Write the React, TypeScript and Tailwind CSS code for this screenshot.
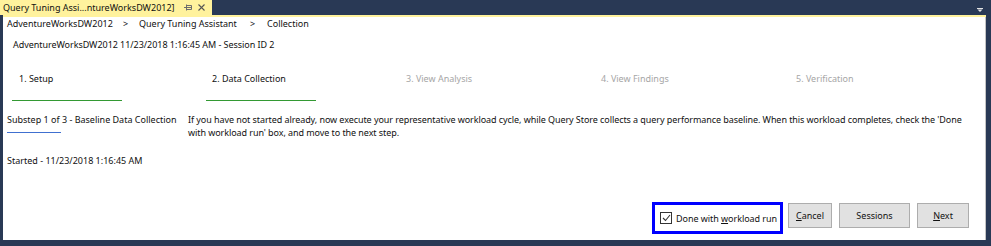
import React from 'react';

const steps = [
  { label: '1. Setup', done: true },
  { label: '2. Data Collection', done: true },
  { label: '3. View Analysis', done: false },
  { label: '4. View Findings', done: false },
  { label: '5. Verification', done: false },
];

function PinIcon() {
  return (
    <svg width="8" height="7" viewBox="0 0 8 7" className="text-[#6d6d6d]">
      <path d="M0 3.5h2.5M2.5 0.5v6M2.5 1.5h5v4h-5M2.5 3.5h5" stroke="currentColor" strokeWidth="1" fill="none" />
    </svg>
  );
}

function CloseIcon() {
  return (
    <svg width="7" height="7" viewBox="0 0 7 7" className="text-[#555]">
      <path d="M0.5 0.5l6 6M6.5 0.5l-6 6" stroke="currentColor" strokeWidth="1.1" fill="none" />
    </svg>
  );
}

function Button({ w, children }: { w: string; children: React.ReactNode }) {
  return (
    <button className={`${w} h-[25px] bg-[#e1e1e1] border border-[#adadad] text-[9px] text-[#111] leading-none flex items-center justify-center`}>
      {children}
    </button>
  );
}

export default function App() {
  return (
    <div
      className="w-[991px] h-[246px] bg-[#293955] flex flex-col overflow-hidden text-[#111] text-[9px] leading-none"
      style={{ fontFamily: '"Noto Sans", "Open Sans", sans-serif' }}
    >
      {/* tab strip */}
      <div className="h-[15px] flex items-stretch">
        <div className="w-[212px] bg-[#fff29d] flex items-center pl-[3px] pr-[7px]">
          <span className="flex-1 whitespace-nowrap">Query Tuning Assi...ntureWorksDW2012]</span>
          <span className="mr-[6px] flex"><PinIcon /></span>
          <span className="flex"><CloseIcon /></span>
        </div>
        <div className="flex-1 flex justify-end items-start pt-[8px] pr-[8px]">
          <svg width="6" height="4" viewBox="0 0 6 4">
            <path d="M0 0.5h6" stroke="#e4e4e4" strokeWidth="1" />
            <path d="M0.5 1.5h5l-2.5 2.5z" fill="#e4e4e4" />
          </svg>
        </div>
      </div>
      <div className="h-[2px] bg-[#fff29d] ml-[3px] mr-[5px]" />

      {/* document */}
      <div className="flex-1 ml-[3px] mr-[5px] mb-[6px] bg-white border-r border-[#c4c4c4] flex flex-col">
        <div className="pl-[4px] h-[13px] flex items-center whitespace-nowrap">
          <span className="w-[116px]">AdventureWorksDW2012</span>
          <span className="w-[16px]">&gt;</span>
          <span className="w-[111px]">Query Tuning Assistant</span>
          <span className="w-[17px]">&gt;</span>
          <span>Collection</span>
        </div>
        <div className="pl-[10px] mt-[8px] h-[13px] flex items-center tracking-[-0.05px]">
          AdventureWorksDW2012 11/23/2018 1:16:45 AM - Session ID 2
        </div>

        <div className="mt-[21px] pl-[9px] grid grid-cols-[194px_194px_194px_194px_194px]">
          {steps.map((s, i) => (
            <div key={s.label} className="flex flex-col">
              <div
                className={`h-[13px] flex items-center ${i === 4 ? 'pl-[8px]' : i === 0 || i === 3 ? 'pl-[7px]' : 'pl-[6px]'} ${
                  s.done ? 'text-[#111]' : 'text-[#a6a6a6]'
                }`}
              >
                {s.label}
              </div>
              <div className={`mt-[15px] h-[1px] w-[110px] ${s.done ? 'bg-[#339933]' : ''}`} />
            </div>
          ))}
        </div>

        <div className="mt-[12px] pl-[4px] flex">
          <div className="w-[181px] flex flex-col">
            <div className="h-[13px] flex items-center whitespace-nowrap">Substep 1 of 3 - Baseline Data Collection</div>
            <div className="mt-[6px] h-[1px] w-[54px] bg-[#4070d0]" />
          </div>
          <div className="leading-[13px] whitespace-nowrap tracking-[-0.07px]">
            If you have not started already, now execute your representative workload cycle, while Query Store collects a query performance baseline. When this workload completes, check the 'Done
            <br />
            with workload run' box, and move to the next step.
          </div>
        </div>

        <div className="mt-[15px] pl-[4px] h-[13px] flex items-center">Started - 11/23/2018 1:16:45 AM</div>

        <div className="mt-auto mb-[6px] flex items-start justify-end pr-[16px]">
          <div className="border-[3px] border-[#0000ff] h-[32px] w-[131px] flex items-center pl-[5px] gap-[4px] mr-[5px]">
            <span className="w-[12px] h-[12px] border border-[#333] flex items-center justify-center bg-white">
              <svg width="9" height="8" viewBox="0 0 9 8">
                <path d="M1 4l2.5 2.5L8 1" stroke="#333" strokeWidth="1.1" fill="none" />
              </svg>
            </span>
            <span className="whitespace-nowrap tracking-[-0.05px]">
              Done with <span className="underline">w</span>orkload run
            </span>
          </div>
          <div className="flex gap-[7px] mt-[1px]">
            <Button w="w-[44px]"><span className="underline">C</span>ancel</Button>
            <Button w="w-[71px]">Sessions</Button>
            <Button w="w-[52px]"><span className="underline">N</span>ext</Button>
          </div>
        </div>
      </div>
    </div>
  );
}
